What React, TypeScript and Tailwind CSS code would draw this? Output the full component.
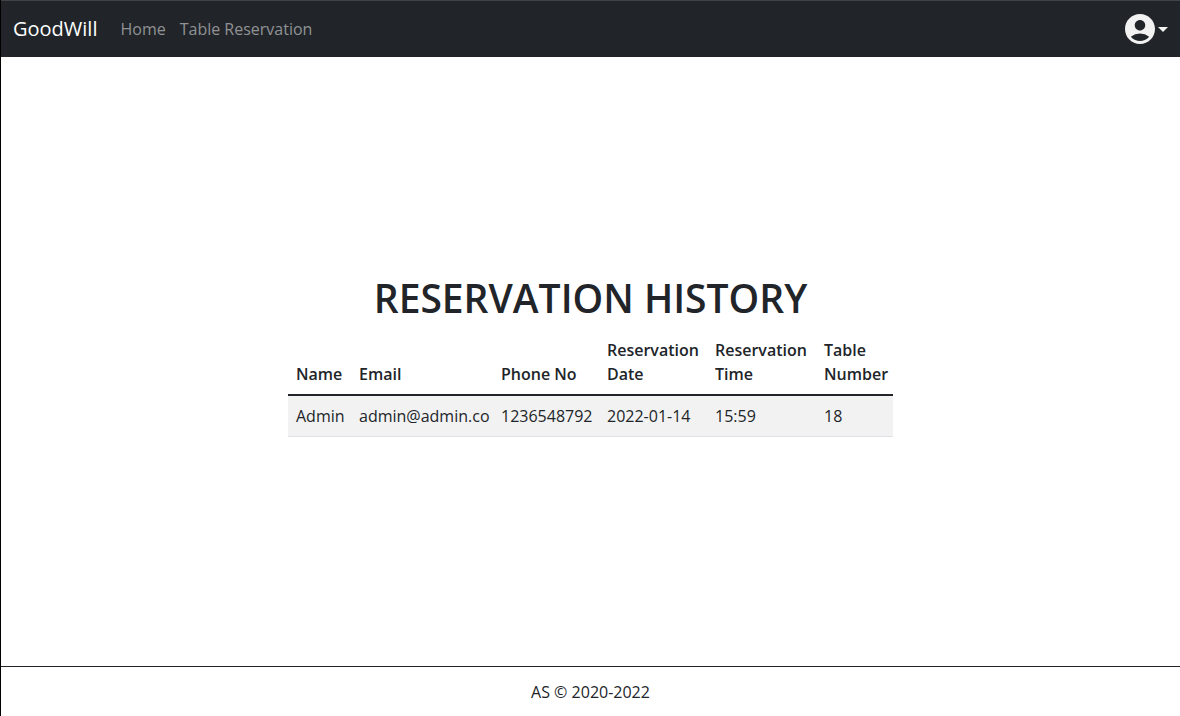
import { MdAccountCircle } from "react-icons/md";

const columns = [
  { label: "Name", width: "w-[63px]" },
  { label: "Email", width: "w-[142px]" },
  { label: "Phone No", width: "w-[106px]" },
  { label: "Reservation Date", width: "w-[108px]" },
  { label: "Reservation Time", width: "w-[109px]" },
  { label: "Table Number", width: "w-[77px]" },
];

const reservations = [
  ["Admin", "admin@admin.co", "1236548792", "2022-01-14", "15:59", "18"],
];

function Navbar() {
  return (
    <nav className="flex h-[57px] items-center border-t border-[#414446] bg-[#212529] px-3">
      <a href="#" className="mr-4 text-xl text-white">
        GoodWill
      </a>
      <div className="flex flex-1 gap-3.5 pl-[7px] text-[#909294]">
        <a href="#">Home</a>
        <a href="#">Table Reservation</a>
      </div>
      <button type="button" aria-label="Account menu" className="flex items-center text-[#f2f2f2]">
        <MdAccountCircle size={36} />
        <svg width="10" height="5" viewBox="0 0 10 5" fill="currentColor" aria-hidden="true">
          <path d="M0 0h10L5 5z" />
        </svg>
      </button>
    </nav>
  );
}

function ReservationTable() {
  return (
    <table className="mb-3 w-[605px] table-fixed border-collapse text-left">
      <colgroup>
        {columns.map((column) => (
          <col key={column.label} className={column.width} />
        ))}
      </colgroup>
      <thead>
        <tr className="border-b-2 border-[#212529]">
          {columns.map((column) => (
            <th key={column.label} scope="col" className="py-2 pl-2 align-bottom font-semibold">
              {column.label}
            </th>
          ))}
        </tr>
      </thead>
      <tbody>
        {reservations.map((row, index) => (
          <tr key={index} className="border-b border-[#dee2e6] odd:bg-[#f2f2f2]">
            {row.map((cell, cellIndex) => (
              <td key={cellIndex} className="py-2 pl-2 whitespace-nowrap">
                {cell}
              </td>
            ))}
          </tr>
        ))}
      </tbody>
    </table>
  );
}

export default function App() {
  return (
    <div className="flex min-h-screen flex-col border-l border-black bg-white font-['Open_Sans','Noto_Sans',sans-serif] text-base text-[#212529]">
      <Navbar />
      <main className="flex flex-1 flex-col items-center justify-center">
        <h1 className="mb-2 text-[39px] leading-[48px] font-semibold">RESERVATION HISTORY</h1>
        <ReservationTable />
      </main>
      <footer className="flex h-[50px] items-center justify-center border-t border-[#212529]">
        AS © 2020-2022
      </footer>
    </div>
  );
}
